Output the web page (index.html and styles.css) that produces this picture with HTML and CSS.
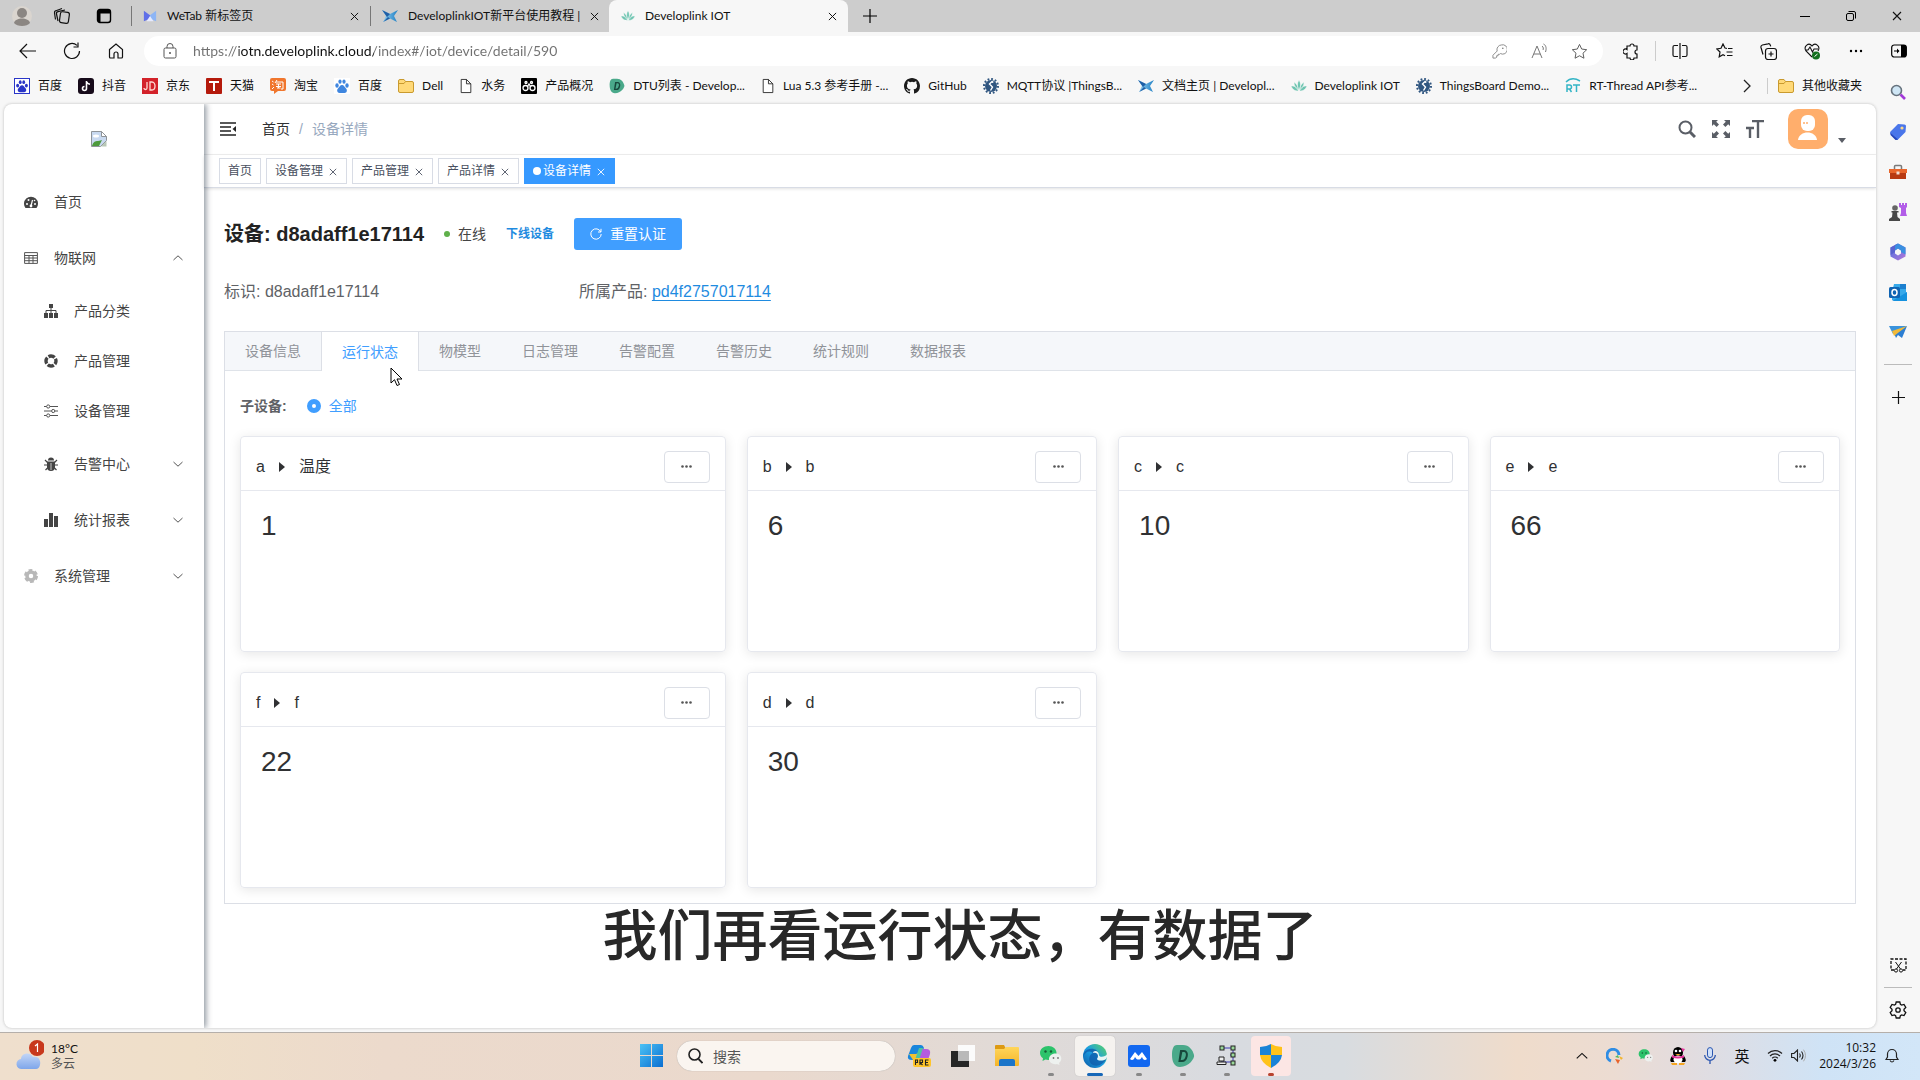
FILE: index.html
```html
<!DOCTYPE html>
<html lang="zh-CN">
<head>
<meta charset="utf-8">
<title>Developlink IOT</title>
<link rel="stylesheet" href="styles.css">
</head>
<body>
<svg class="defs" aria-hidden="true">
  <defs>
    <linearGradient id="g-blue" x1="0" y1="0" x2="1" y2="1"><stop offset="0" stop-color="#4cc2f5"/><stop offset="1" stop-color="#0a6ed1"/></linearGradient>
    <linearGradient id="g-edge" x1="0" y1="1" x2="1" y2="0"><stop offset="0" stop-color="#0c59a4"/><stop offset=".5" stop-color="#1b9de2"/><stop offset="1" stop-color="#5fd85c"/></linearGradient>
    <linearGradient id="g-folder" x1="0" y1="0" x2="0" y2="1"><stop offset="0" stop-color="#ffd65a"/><stop offset="1" stop-color="#f5b52a"/></linearGradient>
    <linearGradient id="g-purple" x1="0" y1="0" x2="1" y2="1"><stop offset="0" stop-color="#4a6fe0"/><stop offset="1" stop-color="#b478d8"/></linearGradient>
    <linearGradient id="g-cloud" x1="0" y1="0" x2="0" y2="1"><stop offset="0" stop-color="#c3d6f7"/><stop offset="1" stop-color="#7ea6ea"/></linearGradient>
    <linearGradient id="g-bow" x1="0" y1="0" x2="1" y2="0"><stop offset="0" stop-color="#9ad4f2"/><stop offset="1" stop-color="#1f7fc4"/></linearGradient>
  </defs>
  <symbol id="close" viewBox="0 0 10 10"><path d="M1 1l8 8M9 1l-8 8" fill="none" stroke="currentColor" stroke-width="1.1"/></symbol>
  <symbol id="bow" viewBox="0 0 16 16"><path d="M0 2l8 4 8-4-4 6 3 6-7-3.500L1 14l3-6z" fill="url(#g-bow)"/><path d="M0 2l8 4-3 3zM1 14l5-5 2 1.500z" fill="#1f5fa6"/></symbol>
  <symbol id="leaf" viewBox="0 0 16 16"><path d="M8 2c2 3 2 7 0 11-2-4-2-8 0-11zM3 4c3 2 4 5 5 9-3-2-5-5-5-9zM13 4c-3 2-4 5-5 9 3-2 5-5 5-9zM0 8c4 0 6 1 8 5-4 0-6-1-8-5zM16 8c-4 0-6 1-8 5 4 0 6-1 8-5z" fill="#6cc4b0" stroke="#f7f7f7" stroke-width=".5"/></symbol>
  <symbol id="paw" viewBox="0 0 16 16"><g fill="currentColor"><ellipse cx="3" cy="7.500" rx="1.700" ry="2.200"/><ellipse cx="6" cy="3.600" rx="1.600" ry="2.200"/><ellipse cx="10" cy="3.600" rx="1.600" ry="2.200"/><ellipse cx="13" cy="7.500" rx="1.700" ry="2.200"/><path d="M8 7c2 0 2.500 2 4 3.500s1 4.500-1.500 4.500H5.500C3 15 2.500 11.500 4 10.500 5.500 9 6 7 8 7z"/></g></symbol>
  <symbol id="folder" viewBox="0 0 16 16"><path d="M.5 3a1.500 1.500 0 0 1 1.500-1.500h4L7.500 3.500H14A1.500 1.500 0 0 1 15.500 5v8a1.500 1.500 0 0 1-1.500 1.500H2A1.500 1.500 0 0 1 .5 13z" fill="#ffd978" stroke="#c99a2e"/><path d="M1 5.500h5l1.500-2" fill="none" stroke="#c99a2e"/></symbol>
  <symbol id="page" viewBox="0 0 16 16"><path d="M2.500.5h6l5 5v10h-11zM8.500.5v5h5" fill="#fff" stroke="#222"/></symbol>
  <symbol id="dlogo" viewBox="0 0 24 24"><path d="M6 1h6c6 0 10 5 11 10 1 3-5 12-14 12C3 23 1 17 1 11 1 6 2 1 6 1z" fill="#4aa98a"/><path d="M10 7h3c5 0 3 10-2 10H8.500zM10.500 7L8.500 17" fill="none" stroke="#17483b" stroke-width="2"/></symbol>
  <symbol id="gearblue" viewBox="0 0 16 16"><circle cx="8" cy="8" r="6" fill="#305680"/><circle cx="8" cy="8" r="7" fill="none" stroke="#305680" stroke-width="2" stroke-dasharray="1.800 1.860"/><path d="M9 3.500L6.500 6l3 3-2 3.500" fill="none" stroke="#fff" stroke-width="1.400"/><circle cx="9.500" cy="4" r="1" fill="#fff"/></symbol>
  <symbol id="chev" viewBox="0 0 12 12"><path d="M1.500 4L6 8.200 10.500 4" fill="none" stroke="currentColor"/></symbol>
  <symbol id="wechat" viewBox="0 0 24 24"><path d="M9.500 2C4.500 2 1 5.200 1 9c0 2.200 1.200 4 3 5.300L3.500 17l3-1.500c5 1.500 11-1.500 11-6.500 0-4-3.500-7-8-7z" fill="#2cc36b"/><circle cx="6.500" cy="7.500" r="1.200" fill="#145c33"/><circle cx="12" cy="7.500" r="1.200" fill="#145c33"/><path d="M16.500 9.500c-4 0-6.500 2.500-6.500 5.500 0 3.500 4 6 8 5l2.500 1-.5-2c4-3 3-9.500-3.500-9.500z" fill="#eef1ef"/><circle cx="14.500" cy="14" r=".9" fill="#777"/><circle cx="19" cy="14" r=".9" fill="#777"/></symbol>
  <symbol id="tri" viewBox="0 0 8 12"><path d="M1 1l6 5-6 5z" fill="currentColor"/></symbol>
</svg>

<header class="titlebar">
  <button class="tb-btn" aria-label="个人资料"><svg width="20" height="20" viewBox="0 0 20 20"><circle cx="10" cy="10" r="10" fill="#dad5cf"/><circle cx="10" cy="7" r="5" fill="#8b8682"/><path d="M2 17c1-6 15-6 16 0-3 4-13 4-16 0z" fill="#8b8682"/></svg></button>
  <button class="tb-btn narrow" aria-label="工作区"><svg width="18" height="18" viewBox="0 0 18 18"><g fill="none" stroke="#111" stroke-width="1.200"><rect x="7" y="5" width="9" height="11" rx="2" transform="rotate(8 11 10)"/><path d="M5 14L3.500 7c-.3-1.200.3-2 1.500-2.300L12 3M2.500 12.500L1.500 6c-.2-1.200.3-2 1.500-2.300L9 1.500"/></g></svg></button>
  <button class="tb-btn wide" aria-label="标签操作"><svg width="16" height="16" viewBox="0 0 16 16"><rect x="1.500" y="1.500" width="13" height="13" rx="2.500" fill="none" stroke="#000" stroke-width="1.400"/><path d="M2 2h12v3.500H2zM2 5h2.500v9H2z"/></svg></button>
  <nav class="tabs">
    <div class="tab"><svg width="14" height="14" viewBox="0 0 16 16"><path d="M1 2l7 5v4l-7 3z" fill="#5f6fe8"/><path d="M15 2L8 7v4l7 3z" fill="#8db5f5"/><path d="M4 14l4-6 4 6z" fill="#e6eaff"/></svg><a href="#" class="tab-name">WeTab 新标签页</a><button class="x" aria-label="关闭"><svg width="9" height="9"><use href="#close"/></svg></button></div>
    <div class="tab"><svg width="16" height="16"><use href="#bow"/></svg><a href="#" class="tab-name">DeveloplinkIOT新平台使用教程 |</a><button class="x" aria-label="关闭"><svg width="9" height="9"><use href="#close"/></svg></button></div>
    <div class="tab on"><svg width="14" height="14"><use href="#leaf"/></svg><a href="#" class="tab-name">Developlink IOT</a><button class="x" aria-label="关闭"><svg width="9" height="9"><use href="#close"/></svg></button></div>
  </nav>
  <button class="tb-btn" aria-label="新标签"><svg width="14" height="14" viewBox="0 0 14 14"><path d="M7 0v14M0 7h14" stroke="#000" stroke-width="1.200"/></svg></button>
  <div class="winctl">
    <button aria-label="最小化"><svg width="10" height="10" viewBox="0 0 10 10"><path d="M0 5.500h10" stroke="#000"/></svg></button>
    <button aria-label="还原"><svg width="10" height="10" viewBox="0 0 10 10"><g fill="none" stroke="#000"><rect x=".5" y="2.500" width="7" height="7" rx="1.500"/><path d="M2.500.5H8A1.500 1.500 0 0 1 9.500 2v5.500"/></g></svg></button>
    <button aria-label="关闭"><svg width="10" height="10"><use href="#close"/></svg></button>
  </div>
</header>

<div class="toolbar">
  <button class="nav-btn" aria-label="后退"><svg width="18" height="16" viewBox="0 0 18 16"><path d="M17 8H1.500M8 1L1 8l7 7" fill="none" stroke="#111" stroke-width="1.200"/></svg></button>
  <button class="nav-btn" aria-label="刷新"><svg width="18" height="18" viewBox="0 0 18 18"><path d="M16.500 9a7.500 7.500 0 1 1-2.500-5.600M15 .5V5h-4.500" fill="none" stroke="#111" stroke-width="1.200"/></svg></button>
  <button class="nav-btn" aria-label="主页"><svg width="16" height="16" viewBox="0 0 16 16"><path d="M1.500 6.500L8 1l6.500 5.500V14a1 1 0 0 1-1 1H10v-4a2 2 0 0 0-4 0v4H2.500a1 1 0 0 1-1-1z" fill="none" stroke="#111" stroke-width="1.200"/></svg></button>
  <div class="address">
    <svg width="14" height="16" viewBox="0 0 14 16"><rect x="1" y="5" width="12" height="10" rx="1.500" fill="none" stroke="#555"/><path d="M4 5V3.500a3 3 0 0 1 6 0V5" fill="none" stroke="#555"/><circle cx="7" cy="10" r="1" fill="#555"/></svg>
    <input class="url" type="text" aria-label="地址" value="https://iotn.developlink.cloud/index#/iot/device/detail/590">
    <button class="addr-btn" aria-label="密码"><svg width="15" height="15" viewBox="0 0 16 16"><path d="M10 1a5 5 0 0 0-4.500 6.500L1 12v3h3l1-1v-1.500h1.500V11H8l1-.8A5 5 0 1 0 10 1z" fill="none" stroke="#888"/><circle cx="11.500" cy="4.500" r=".9" fill="#888"/></svg></button>
    <button class="addr-btn" aria-label="朗读"><svg width="17" height="16" viewBox="0 0 17 16"><path d="M1 15L6 3l5 12M2.800 11h6.400M11 3c1.500 1 1.500 3 1 4M12.500 1c3 1.500 3 5 2 8" fill="none" stroke="#777"/></svg></button>
    <button class="addr-btn" aria-label="收藏"><svg width="17" height="17" viewBox="0 0 18 18"><path d="M9 1.500l2.300 4.900 5.300.7-3.900 3.700 1 5.300L9 13.500l-4.700 2.600 1-5.300L1.400 7.100l5.300-.7z" fill="none" stroke="#555"/></svg></button>
  </div>
  <button class="nav-btn" aria-label="扩展"><svg width="17" height="17" viewBox="0 0 17 17"><path d="M4 3h3a2 2 0 0 1 4 0h3v4a2 2 0 0 0 0 4v4h-3a2 2 0 0 1-4 0H4v-4.500a2.500 2.500 0 1 1 0-4z" fill="none" stroke="#111" stroke-width="1.200"/></svg></button>
  <span class="vline"></span>
  <button class="nav-btn" aria-label="分屏"><svg width="16" height="16" viewBox="0 0 16 16"><path d="M6 2.500H2.500a1.500 1.500 0 0 0-1.500 1.500v8a1.500 1.500 0 0 0 1.500 1.500H6M10 2.500h3.500A1.500 1.500 0 0 1 15 4v8a1.500 1.500 0 0 1-1.500 1.500H10M8 0v16" fill="none" stroke="#111" stroke-width="1.200"/></svg></button>
  <button class="nav-btn" aria-label="收藏夹"><svg width="17" height="16" viewBox="0 0 17 16"><path d="M11 5.500L9 5 7 1 5 5.300.8 5.900 4 9l-.8 4.800L7 11.700l2 1M12 5.500h4.500M10.500 9H16.500M11 12.500h5.500" fill="none" stroke="#111" stroke-width="1.200"/></svg></button>
  <button class="nav-btn" aria-label="集锦"><svg width="17" height="17" viewBox="0 0 17 17"><rect x="5.500" y="5.500" width="11" height="11" rx="2.500" fill="none" stroke="#111" stroke-width="1.200"/><path d="M11 8.500v5M8.500 11h5M3 11.500L1 4.500C.7 3.300 1.200 2.400 2.400 2L8 .8c1.200-.3 2 .4 2.400 1.600l.3 1" fill="none" stroke="#111" stroke-width="1.200"/></svg></button>
  <button class="nav-btn" aria-label="浏览器健康"><svg width="17" height="17" viewBox="0 0 17 17"><path d="M8 14L2 8C-1 3 5-1 8 3c3-4 9 0 6 5M1 7h3l2-3 2.500 5L10 6h4" fill="none" stroke="#111" stroke-width="1.100"/><circle cx="12" cy="12.500" r="4" fill="#13711f"/><path d="M10.500 13.500L13.500 11" stroke="#fff"/></svg></button>
  <button class="nav-btn" aria-label="更多"><svg width="14" height="4" viewBox="0 0 14 4"><circle cx="2" cy="2" r="1.200"/><circle cx="7" cy="2" r="1.200"/><circle cx="12" cy="2" r="1.200"/></svg></button>
  <button class="nav-btn last" aria-label="边栏"><svg width="16" height="14" viewBox="0 0 16 14"><rect x=".7" y="1" width="14.600" height="12" rx="2.500" fill="none" stroke="#000" stroke-width="1.200"/><path d="M10 1h4l1.500 2v8L14 13h-4zM3 6.500h3V4.500L8.500 7 6 9.500v-2H3z"/></svg></button>
</div>

<div class="browser">
  <div class="left">
    <nav class="bookmarks">
      <a href="#"><svg class="boxed" width="16" height="16" color="#2a36c8"><use href="#paw"/></svg><span>百度</span></a>
      <a href="#"><svg width="16" height="16" viewBox="0 0 16 16"><rect width="16" height="16" rx="3" fill="#170b1a"/><path d="M8.500 3v7.500a2 2 0 1 1-2-2M8.500 3c.3 2 1.500 3 3.500 3.200" fill="none" stroke="#fff" stroke-width="1.600"/></svg><span>抖音</span></a>
      <a href="#"><svg width="16" height="16" viewBox="0 0 16 16"><rect width="16" height="16" fill="#d3222a"/><path d="M5 4v6c0 2-3 2-3 0M8 4v8h2c4 0 4-8 0-8z" fill="none" stroke="#ffd9d2" stroke-width="1.300"/></svg><span>京东</span></a>
      <a href="#"><svg width="16" height="16" viewBox="0 0 16 16"><rect width="16" height="16" rx="1" fill="#b51a0c"/><path d="M3 4h10M8 4v9" stroke="#fff" stroke-width="2"/></svg><span>天猫</span></a>
      <a href="#"><svg width="16" height="16" viewBox="0 0 16 16"><path d="M2 0h12q2 0 2 2v9q0 2-2 2H8l-4 3v-3H2q-2 0-2-2V2q0-2 2-2z" fill="#f0762d"/><path d="M2 3l1.500 1M2 6l1.500 1M2 11l2-2M7 2L5 5M6 4h7v7h-2M6 6h5M6 8.500h5M8.500 6v4M7 10h3.500" fill="none" stroke="#fff"/></svg><span>淘宝</span></a>
      <a href="#"><svg class="white" width="16" height="16" color="#3f86df"><use href="#paw"/></svg><span>百度</span></a>
      <a href="#"><svg width="16" height="16"><use href="#folder"/></svg><span>Dell</span></a>
      <a href="#"><svg width="14" height="16"><use href="#page"/></svg><span>水务</span></a>
      <a href="#"><svg width="16" height="16" viewBox="0 0 16 16"><rect width="16" height="16" rx="1"/><g fill="none" stroke="#fff" stroke-width="1.300"><circle cx="4.500" cy="10" r="2.500"/><circle cx="11.500" cy="10" r="2.500"/><circle cx="5" cy="4.500" r="1"/><circle cx="10.500" cy="4.500" r="1"/><path d="M6.500 8.500L8 6l1.500 2.500"/></g></svg><span>产品概况</span></a>
      <a href="#"><svg width="16" height="16"><use href="#dlogo"/></svg><span>DTU列表 - Develop...</span></a>
      <a href="#"><svg width="14" height="16"><use href="#page"/></svg><span>Lua 5.3 参考手册 -...</span></a>
      <a href="#"><svg width="16" height="16" viewBox="0 0 16 16"><path d="M8 0C3.580 0 0 3.580 0 8c0 3.540 2.290 6.530 5.470 7.590.4.070.55-.17.55-.38v-1.490c-2.010.37-2.530-.49-2.690-.94-.09-.23-.48-.94-.82-1.130-.28-.15-.68-.52-.01-.53.63-.01 1.080.58 1.230.82.72 1.210 1.870.87 2.330.66.07-.52.28-.87.51-1.070-1.780-.2-3.640-.89-3.640-3.950 0-.87.31-1.590.82-2.150-.08-.2-.36-1.020.08-2.120 0 0 .67-.21 2.200.82a7.600 7.600 0 0 1 4 0c1.530-1.040 2.200-.82 2.200-.82.44 1.100.16 1.920.08 2.120.51.56.82 1.270.82 2.150 0 3.070-1.870 3.750-3.650 3.950.29.25.54.73.54 1.480v2.200c0 .21.15.46.55.38A8 8 0 0 0 16 8c0-4.420-3.580-8-8-8z" fill="#1b1b1b"/></svg><span>GitHub</span></a>
      <a href="#"><svg width="16" height="16"><use href="#gearblue"/></svg><span>MQTT协议 |ThingsB...</span></a>
      <a href="#"><svg width="16" height="16"><use href="#bow"/></svg><span>文档主页 | Developl...</span></a>
      <a href="#"><svg width="16" height="16"><use href="#leaf"/></svg><span>Developlink IOT</span></a>
      <a href="#"><svg width="16" height="16"><use href="#gearblue"/></svg><span>ThingsBoard Demo...</span></a>
      <a href="#"><svg width="16" height="16" viewBox="0 0 16 16"><path d="M1 4c4-4 9-4 14-1M2 14V7h2.500q2 0 2 2t-2 2H2m2.500 0L6.500 14M8 7h7M11.500 7v7" fill="none" stroke="#35b5c6" stroke-width="1.500"/></svg><span>RT-Thread API参考...</span></a>
      <button class="overflow" aria-label="更多收藏"><svg width="8" height="14" viewBox="0 0 8 14"><path d="M1 1l6 6-6 6" fill="none" stroke="#222" stroke-width="1.300"/></svg></button>
      <a class="other" href="#"><svg width="16" height="16"><use href="#folder"/></svg><span>其他收藏夹</span></a>
    </nav>

    <div class="app">
      <aside class="side">
        <div class="logo"><svg width="16" height="16" viewBox="0 0 16 16" role="img" aria-label="logo"><path d="M.5.500h10l5 5v4l-6 6h-9z" fill="#c8d9f0" stroke="#8f9499"/><path d="M10.500.500v5h5z" fill="#fff" stroke="#8f9499"/><path d="M1 15c1-4 3-5 6-5 2 0 3-1 4-1l-3 6z" fill="#4d9a3c"/><ellipse cx="5" cy="5" rx="3" ry="1.500" fill="#fff"/><path d="M10 15.500h5.500V10z" fill="#b7c7b5"/></svg></div>
        <nav class="menu">
          <a href="#"><svg width="14" height="12" viewBox="0 0 14 12"><path d="M1.500 12A7 7 0 1 1 12.500 12z" fill="#444"/><path d="M7 10L8.500 4" stroke="#fff" stroke-width="1.200"/><g fill="#fff"><circle cx="3" cy="8" r="1"/><circle cx="4.500" cy="4" r="1"/><circle cx="11" cy="8" r="1"/><circle cx="10.500" cy="4.500" r=".8"/><circle cx="7" cy="10" r="1.400"/></g></svg><span>首页</span></a>
          <a href="#"><svg width="14" height="12" viewBox="0 0 14 12"><path d="M.6.600h12.800v10.800H.6zM.6 3.500h12.800M.6 6h12.800M.6 8.700h12.800M5 3.500v8M9 3.500v8" fill="none" stroke="#555"/></svg><span>物联网</span><svg class="arrow up" width="12" height="12"><use href="#chev"/></svg></a>
          <a class="sub" href="#"><svg width="14" height="14" viewBox="0 0 14 14"><path d="M5 0h4v4H5zM0 9h4v5H0zM5 9h4v5H5zM10 9h4v5h-4z" fill="#444"/><path d="M7 4v5M2 9V6.500h10V9" fill="none" stroke="#444"/></svg><span>产品分类</span></a>
          <a class="sub" href="#"><svg width="14" height="14" viewBox="0 0 14 14"><circle cx="7" cy="7" r="5" fill="none" stroke="#444" stroke-width="3.400" stroke-dasharray="6.500 1.350" stroke-dashoffset="3.200"/></svg><span>产品管理</span></a>
          <a class="sub" href="#"><svg width="14" height="14" viewBox="0 0 14 14"><g fill="none" stroke="#555"><path d="M0 2.500h2.500M6 2.500h8M0 7h7.500M11 7h3M0 11.500h2.500M6 11.500h8"/><circle cx="4.200" cy="2.500" r="1.600"/><circle cx="9.200" cy="7" r="1.600"/><circle cx="4.200" cy="11.500" r="1.600"/></g></svg><span>设备管理</span></a>
          <a class="sub tall" href="#"><svg width="14" height="14" viewBox="0 0 14 14"><path d="M4 3.500a3 3 0 0 1 6 0zM3 4.500h8V10a4 4 0 0 1-8 0z" fill="#444"/><path d="M0 8h14M1 3l3 3M13 3l-3 3M1.500 13L4 10.500M12.500 13L10 10.500" stroke="#444" stroke-width="1.200"/><path d="M7 6v7" stroke="#fff" stroke-width=".7"/></svg><span>告警中心</span><svg class="arrow" width="12" height="12"><use href="#chev"/></svg></a>
          <a class="sub tall" href="#"><svg width="14" height="14" viewBox="0 0 14 14"><path d="M0 6h4v8H0zM5 0h4v14H5zM10 3h4v11h-4z" fill="#444"/></svg><span>统计报表</span><svg class="arrow" width="12" height="12"><use href="#chev"/></svg></a>
          <a href="#"><svg width="14" height="14" viewBox="0 0 14 14"><circle cx="7" cy="7" r="4" fill="none" stroke="#b8b8b8" stroke-width="3.500"/><circle cx="7" cy="7" r="6" fill="none" stroke="#b8b8b8" stroke-width="2" stroke-dasharray="3.800 2.480"/></svg><span>系统管理</span><svg class="arrow" width="12" height="12"><use href="#chev"/></svg></a>
        </nav>
      </aside>

      <main class="main">
        <div class="navbar">
          <button class="fold" aria-label="折叠菜单"><svg width="16" height="14" viewBox="0 0 16 14"><path d="M0 1h16M0 5h11M0 9h11M0 13h16" stroke="#222" stroke-width="1.600"/><path d="M16 4v6l-3.500-3z" fill="#222"/></svg></button>
          <nav class="crumb"><a href="#">首页</a><i>/</i><span>设备详情</span></nav>
          <div class="right-menu">
            <button aria-label="搜索"><svg width="18" height="18" viewBox="0 0 18 18"><circle cx="7.500" cy="7.500" r="6" fill="none" stroke="#5a5e66" stroke-width="2"/><path d="M12 12l5 5" stroke="#5a5e66" stroke-width="3"/></svg></button>
            <button aria-label="全屏"><svg width="18" height="18" viewBox="0 0 18 18"><path d="M0 0h6L4.200 1.800 7 4.600 4.600 7 1.800 4.200 0 6zM18 0v6l-1.800-1.800L13.400 7 11 4.600l2.800-2.800L12 0zM0 18v-6l1.800 1.800L4.600 11 7 13.400l-2.800 2.800L6 18zM18 18h-6l1.800-1.800-2.800-2.800L13.400 11l2.800 2.800L18 12z" fill="#5a5e66"/></svg></button>
            <button aria-label="字号"><svg width="18" height="18" viewBox="0 0 18 18"><path d="M6 1h12M12 1v17M0 8h8M4 8v10" fill="none" stroke="#5a5e66" stroke-width="2.400"/></svg></button>
            <button class="user" aria-label="用户"><svg width="40" height="40" viewBox="0 0 40 40"><rect width="40" height="40" rx="10" fill="#ffae6c"/><rect x="13" y="6" width="14" height="16" rx="6" fill="#fff"/><path d="M10 31c1-10 18-10 19 0z" fill="#fff"/><circle cx="16" cy="14" r="1" fill="#ffae6c"/><circle cx="19" cy="14" r="1" fill="#ffae6c"/></svg><svg class="caret" width="8" height="5" viewBox="0 0 8 5"><path d="M0 0h8L4 5z" fill="#5a5e66"/></svg></button>
          </div>
        </div>
        <nav class="tags">
          <a href="#">首页</a>
          <a href="#">设备管理<svg width="8" height="8"><use href="#close"/></svg></a>
          <a href="#">产品管理<svg width="8" height="8"><use href="#close"/></svg></a>
          <a href="#">产品详情<svg width="8" height="8"><use href="#close"/></svg></a>
          <a href="#" class="cur">设备详情<svg width="8" height="8"><use href="#close"/></svg></a>
        </nav>

        <section class="content">
          <div class="head">
            <h1>设备: d8adaff1e17114</h1>
            <span class="state">在线</span>
            <a class="off" href="#">下线设备</a>
            <button class="primary"><svg width="12" height="12" viewBox="0 0 12 12"><path d="M10.800 4A5.200 5.200 0 1 0 11.200 6M11 .8V4H8" fill="none" stroke="#fff"/></svg>重置认证</button>
          </div>
          <div class="meta">
            <span>标识: d8adaff1e17114</span>
            <span>所属产品: <a href="#">pd4f2757017114</a></span>
          </div>
          <div class="panel">
            <div class="panel-tabs" role="tablist">
              <button role="tab">设备信息</button><button role="tab" class="cur" aria-selected="true">运行状态</button><button role="tab">物模型</button><button role="tab">日志管理</button><button role="tab">告警配置</button><button role="tab">告警历史</button><button role="tab">统计规则</button><button role="tab">数据报表</button>
            </div>
            <div class="panel-body">
              <div class="filter"><b>子设备:</b><label><input type="radio" name="child" checked>全部</label></div>
              <div class="cards">
                <article class="card"><header><h2>a<svg width="8" height="12"><use href="#tri"/></svg>温度</h2><button aria-label="更多"><svg width="11" height="3" viewBox="0 0 11 3"><circle cx="1.500" cy="1.500" r="1.300" fill="#555"/><circle cx="5.500" cy="1.500" r="1.300" fill="#555"/><circle cx="9.500" cy="1.500" r="1.300" fill="#555"/></svg></button></header><p>1</p></article>
                <article class="card"><header><h2>b<svg width="8" height="12"><use href="#tri"/></svg>b</h2><button aria-label="更多"><svg width="11" height="3" viewBox="0 0 11 3"><circle cx="1.500" cy="1.500" r="1.300" fill="#555"/><circle cx="5.500" cy="1.500" r="1.300" fill="#555"/><circle cx="9.500" cy="1.500" r="1.300" fill="#555"/></svg></button></header><p>6</p></article>
                <article class="card"><header><h2>c<svg width="8" height="12"><use href="#tri"/></svg>c</h2><button aria-label="更多"><svg width="11" height="3" viewBox="0 0 11 3"><circle cx="1.500" cy="1.500" r="1.300" fill="#555"/><circle cx="5.500" cy="1.500" r="1.300" fill="#555"/><circle cx="9.500" cy="1.500" r="1.300" fill="#555"/></svg></button></header><p>10</p></article>
                <article class="card"><header><h2>e<svg width="8" height="12"><use href="#tri"/></svg>e</h2><button aria-label="更多"><svg width="11" height="3" viewBox="0 0 11 3"><circle cx="1.500" cy="1.500" r="1.300" fill="#555"/><circle cx="5.500" cy="1.500" r="1.300" fill="#555"/><circle cx="9.500" cy="1.500" r="1.300" fill="#555"/></svg></button></header><p>66</p></article>
                <article class="card"><header><h2>f<svg width="8" height="12"><use href="#tri"/></svg>f</h2><button aria-label="更多"><svg width="11" height="3" viewBox="0 0 11 3"><circle cx="1.500" cy="1.500" r="1.300" fill="#555"/><circle cx="5.500" cy="1.500" r="1.300" fill="#555"/><circle cx="9.500" cy="1.500" r="1.300" fill="#555"/></svg></button></header><p>22</p></article>
                <article class="card"><header><h2>d<svg width="8" height="12"><use href="#tri"/></svg>d</h2><button aria-label="更多"><svg width="11" height="3" viewBox="0 0 11 3"><circle cx="1.500" cy="1.500" r="1.300" fill="#555"/><circle cx="5.500" cy="1.500" r="1.300" fill="#555"/><circle cx="9.500" cy="1.500" r="1.300" fill="#555"/></svg></button></header><p>30</p></article>
              </div>
            </div>
          </div>
        </section>
      </main>
    </div>
  </div>

  <aside class="rail">
    <button aria-label="搜索"><svg width="16" height="16" viewBox="0 0 16 16"><circle cx="6.500" cy="6.500" r="5" fill="#cfe6f5" stroke="#66727d" stroke-width="1.600"/><path d="M10.500 10.500l4.500 4.500" stroke="#a23ad8" stroke-width="2.600"/></svg></button>
    <button aria-label="购物"><svg width="18" height="18" viewBox="0 0 18 18"><path d="M9 1l6.500.5q1.500 0 1.500 1.500L16.500 9 9 16.500q-1.200 1-2.400 0L1.500 11q-1-1.200 0-2.400z" fill="#4a76ea"/><path d="M1.500 10L9 16.500l-2.500.5L1.500 12z" fill="#2646b8"/><circle cx="13" cy="5" r="1.600" fill="#fbd78a"/></svg></button>
    <button aria-label="工具"><svg width="18" height="16" viewBox="0 0 18 16"><path d="M5.500 5V2.500q0-1 1-1h5q1 0 1 1V5" fill="none" stroke="#7a7a7a" stroke-width="1.500"/><path d="M0 5h18v4H0z" fill="#e8662c"/><path d="M1 9h16v6H1z" fill="#b83a12"/><rect x="7.500" y="7.500" width="3" height="3" fill="#f1ded4"/></svg></button>
    <button aria-label="游戏"><svg width="18" height="18" viewBox="0 0 18 18"><path d="M10 0h2v2h1V0h2v2h1V0h2v4l-1 1v5l1 3h-7l1-3V5l-2-1z" fill="#b25de8"/><circle cx="6" cy="5" r="2.800" fill="#666"/><path d="M2.500 8h7v1.500H8L8.500 14l2.500 2v2H0v-2l3-2 .5-4.500h-1z" fill="#484848"/></svg></button>
    <button aria-label="Microsoft 365"><svg width="18" height="18" viewBox="0 0 18 18"><path d="M9 .5l7.500 4v9l-7.500 4-7.500-4v-9zM9 5.500L6 7.500v3l3 2 3-2v-3z" fill="url(#g-purple)" fill-rule="evenodd"/><path d="M9 .5l7.500 4v7L12 9V7.500L9 5.500 6 7.500V2z" fill="#3a8fe0"/><path d="M1.500 4.500L9 .5 6 3v6l-4.500 3z" fill="#5a62cf"/></svg></button>
    <button aria-label="Outlook"><svg width="18" height="18" viewBox="0 0 18 18"><path d="M5 1h12v8l1 1v7H3V9z" fill="#37a9ea"/><path d="M11 1h6v5h-6z" fill="#1c80cf"/><path d="M18 9l-8 5-7 4h15z" fill="#1591de"/><rect x="0" y="4" width="11" height="11" rx="1.500" fill="#0f64b3"/><ellipse cx="5.500" cy="9.500" rx="2.500" ry="3" fill="none" stroke="#fff" stroke-width="1.500"/></svg></button>
    <button aria-label="Drop"><svg width="18" height="14" viewBox="0 0 18 14"><path d="M0 1h18L8 7l-4 2z" fill="#3a93dc"/><path d="M18 1l-5 12-4-3-2 3-2-5z" fill="#2c7ed2"/><path d="M18 1L3 6l2 5z" fill="#f0b93a"/></svg></button>
    <hr>
    <button aria-label="添加"><svg width="13" height="13" viewBox="0 0 13 13"><path d="M6.500 0v13M0 6.500h13" stroke="#111" stroke-width="1.200"/></svg></button>
    <button class="push" aria-label="截图"><svg width="17" height="15" viewBox="0 0 17 15"><path d="M4 12H1V1h15v11h-3" fill="none" stroke="#111" stroke-width="1.300" stroke-dasharray="3 1.500"/><path d="M5.500 4l5 7M11.500 4l-5 7" stroke="#111"/><circle cx="6" cy="12.500" r="1.600" fill="none" stroke="#111"/><circle cx="11" cy="12.500" r="1.600" fill="none" stroke="#111"/></svg></button>
    <hr class="low">
    <button aria-label="设置"><svg width="18" height="18" viewBox="0 0 18 18"><path d="M7.200 1h3.600l.6 2.400 1.200.7 2.400-.7 1.800 3.100L15 8.300v1.400l1.800 1.800-1.800 3.100-2.400-.7-1.200.7-.6 2.400H7.200l-.6-2.400-1.200-.7-2.400.7-1.800-3.100L3 9.700V8.300L1.200 6.500 3 3.400l2.400.7 1.200-.7z" fill="none" stroke="#111" stroke-width="1.300"/><circle cx="9" cy="9" r="2.200" fill="none" stroke="#111" stroke-width="1.300"/></svg></button>
  </aside>
</div>

<footer class="taskbar">
  <button class="weather"><svg width="28" height="32" viewBox="0 0 28 32"><path d="M6 29a5 5 0 0 1-1-10c0-6 9-8 12-2 6-1 8 4 7 8q-1 4-4 4z" fill="url(#g-cloud)"/><circle cx="21" cy="8" r="8" fill="#c8381c"/><path d="M19 6l2.500-2v8" fill="none" stroke="#fff" stroke-width="1.200"/></svg><span>18°C<br><em>多云</em></span></button>
  <div class="dock">
    <button class="start" aria-label="开始"><svg width="23" height="23" viewBox="0 0 23 23"><path d="M0 0h11v11H0zM12 0h11v11H12zM0 12h11v11H0zM12 12h11v11H12z" fill="url(#g-blue)"/></svg></button>
    <label class="search"><svg width="15" height="16" viewBox="0 0 15 16"><circle cx="6.500" cy="6.500" r="5.500" fill="none" stroke="#222" stroke-width="1.600"/><path d="M10.500 11l4 4" stroke="#222" stroke-width="1.800"/></svg><input type="text" placeholder="搜索" aria-label="搜索"></label>
    <button aria-label="Copilot"><svg width="24" height="24" viewBox="0 0 24 24"><path d="M7 1h7q2 0 3 3l-6 12H5Q0 16 1 12L4 4q1-3 3-3z" fill="#1a86dc"/><path d="M2 10l4 6h5l3-8-5 2z" fill="#f0c232"/><path d="M14 5h5q5 0 4 5l-3 9q-1 3-5 3h-4z" fill="#b45be0"/><path d="M16 4l-4 12H8l4-12z" fill="#4fc3a0"/><rect x="6" y="14" width="18" height="9" rx="2" fill="#ffc52b"/><path d="M8.500 21v-5h2v2.500h-2M13 21v-5h2.500v2.500H13l2.500 2.500M21.500 16H18.500v5h3M18.500 18.500h2.500" fill="none" stroke="#222" stroke-width="1.100"/></svg></button>
    <button aria-label="任务视图"><svg width="24" height="24" viewBox="0 0 24 24"><path d="M7 1h17v16H7z" fill="#fbfbfb"/><path d="M0 7h18v16H0z" fill="#262626"/><path d="M7 7h11v10H7z" fill="#b9b9b9"/></svg></button>
    <button aria-label="资源管理器"><svg width="24" height="24" viewBox="0 0 24 24"><path d="M0 2q0-1 1-1h8l2 4H0z" fill="#dd9a13"/><path d="M0 5h9l2-2h12q1 0 1 1v17q0 1-1 1H0z" fill="url(#g-folder)"/><path d="M4 22v-5q0-2 2-2h12q2 0 2 2v5z" fill="#1b75c9"/></svg></button>
    <button class="run" aria-label="微信"><svg width="24" height="24"><use href="#wechat"/></svg></button>
    <button class="run front" aria-label="Edge"><svg width="24" height="24" viewBox="0 0 24 24"><circle cx="12" cy="12" r="12" fill="url(#g-edge)"/><path d="M1 9c3-6 14-6 15 2 0 2-2 3-2 4 1 2 6 2 9 0-2 5-8 8-13 6C4 18 6 10 10 9 6 6 2 8 0 13z" fill="#0f5aa8" opacity=".75"/><path d="M10 9c5-1 6 3 4 6 1 2 6 2 9 0 2-3 1-5 1-5-1 3-8 4-8 1 0-5-6-5-6-2z" fill="#e8f6f5"/></svg></button>
    <button class="run" aria-label="腾讯会议"><svg width="22" height="22" viewBox="0 0 22 22"><rect width="22" height="22" rx="3" fill="#1268f0"/><path d="M2 14l5-7 3.500 4L14 7l5 7q-2 2-4 0l-1-2-1.500 2q-2 1-4 0L7 12l-1 2q-2 2-4 0z" fill="#fff"/></svg></button>
    <button class="run" aria-label="Developlink"><svg width="24" height="24"><use href="#dlogo"/></svg></button>
    <button class="run" aria-label="网络"><svg width="22" height="22" viewBox="0 0 22 22"><path d="M7 3h10v14H5M17 10h-3" fill="none" stroke="#3b3bb0"/><g fill="#9bd89a" stroke="#222"><rect x="4" y="1" width="4" height="4"/><rect x="15" y="1" width="4" height="4"/><rect x="15" y="8" width="4" height="4"/><rect x="15" y="16" width="4" height="4"/></g><path d="M3 12h5v4H3zM1 17h9v2.500H1z" fill="#eee" stroke="#222"/></svg></button>
    <button class="run alert" aria-label="安全"><svg width="22" height="24" viewBox="0 0 22 24"><path d="M11 0q5 3 11 3v8H11z" fill="#ffc21a"/><path d="M11 0Q6 3 0 3v8h11z" fill="#1b83d6"/><path d="M0 11h11v13Q1 19 0 11z" fill="#ffc21a"/><path d="M22 11H11v13q10-5 11-13z" fill="#1b83d6"/></svg></button>
  </div>
  <div class="tray">
    <button aria-label="展开"><svg class="up" width="14" height="14"><use href="#chev"/></svg></button>
    <button aria-label="同步"><svg width="17" height="16" viewBox="0 0 17 16"><path d="M5 13A6 6 0 1 1 13 7" fill="none" stroke="#2f8de4" stroke-width="3"/><path d="M9 9l3-2 1 3z" fill="#52b95a"/><path d="M13 8l4 2-2 2z" fill="#f3b42b"/><path d="M9 11l5 1-2 4z" fill="#e8642c"/></svg></button>
    <button aria-label="微信"><svg width="16" height="16"><use href="#wechat"/></svg></button>
    <button aria-label="QQ"><svg width="16" height="18" viewBox="0 0 16 18"><ellipse cx="8" cy="5.500" rx="5" ry="5.500"/><path d="M2 9q-3 4-1 6h14q2-2-1-6z"/><ellipse cx="8" cy="12.500" rx="4.500" ry="4" fill="#fff"/><path d="M2 8q6 3 12 0v2.500q-6 2-12 0z" fill="#e6339b"/><circle cx="6" cy="4" r="1.300" fill="#fff"/><circle cx="10" cy="4" r="1.300" fill="#fff"/><path d="M5 7h6L8 8.500z" fill="#f5a623"/><path d="M11 1l4 1-2 3z" fill="#e6339b"/><path d="M1 16h6v2H2zM9 16h6l-1 2H9z" fill="#f5a623"/></svg></button>
    <button aria-label="麦克风"><svg width="12" height="17" viewBox="0 0 12 17"><rect x="3.500" y=".6" width="5" height="10" rx="2.500" fill="#cfe0fa" stroke="#2a55b0"/><path d="M.7 8a5.300 5.300 0 0 0 10.600 0M6 13.500V17" fill="none" stroke="#2a55b0" stroke-width="1.300"/></svg></button>
    <button class="ime">英</button>
    <button class="pair" aria-label="网络和音量"><svg width="16" height="13" viewBox="0 0 16 13"><path d="M1 4.500a10 10 0 0 1 14 0M3 7a7 7 0 0 1 10 0M5.200 9.300a4 4 0 0 1 5.600 0" fill="none" stroke="#222" stroke-width="1.200"/><circle cx="8" cy="11.300" r="1.400"/></svg><svg width="15" height="13" viewBox="0 0 15 13"><path d="M.6 4.500H3L6.500 1v11L3 8.500H.6zM8.500 4.500q1.500 2 0 4M10.500 2.500q3 4 0 8" fill="none" stroke="#222" stroke-width="1.100"/><path d="M12.500.7q4 5.800 0 11.600" fill="none" stroke="#aaa"/></svg></button>
    <button class="clock">10:32<br>2024/3/26</button>
    <button aria-label="通知"><svg width="14" height="16" viewBox="0 0 14 16"><path d="M1 11.500L2.500 9V6a4.500 4.500 0 0 1 9 0v3l1.500 2.500zM5 12.500q2 3 4 0" fill="none" stroke="#222" stroke-width="1.200"/></svg></button>
  </div>
</footer>

<div class="caption">我们再看运行状态，有数据了</div>
<svg class="cursor" width="13" height="20" viewBox="0 0 13 20" aria-hidden="true"><path d="M1 1v15l3.500-3.300L7 18.500l2.500-1L7 12h5z" fill="#fff" stroke="#000"/></svg>
</body>
</html>
```
FILE: styles.css
```css
* { box-sizing: border-box; }
body {
  margin: 0;
  min-height: 100vh;
  display: flex;
  flex-direction: column;
  position: relative;
  background: #f7f7f7;
  color: #111;
  font: 12px/16px Lato, "Noto Sans CJK SC", sans-serif;
}
button {
  margin: 0;
  padding: 0;
  border: 0;
  background: none;
  color: inherit;
  font: inherit;
  display: flex;
  align-items: center;
  justify-content: center;
}
a { color: inherit; text-decoration: none; }
svg { flex: none; }
.defs { position: absolute; width: 0; height: 0; }

/* Window title bar */
.titlebar { display: flex; align-items: stretch; height: 32px; background: #cdcdcd; }
.tb-btn { width: 44px; height: 32px; }
.tb-btn.narrow { width: 36px; }
.tb-btn.wide { width: 48px; margin-right: 3px; }
.tabs { display: flex; }
.tab {
  width: 239px;
  height: 32px;
  padding: 0 10px 0 12px;
  display: flex;
  align-items: center;
  gap: 10px;
}
.tab:not(.on) { background: linear-gradient(#777, #777) left center / 1px 20px no-repeat; }
.tab.on { background: #f7f7f7; border-radius: 8px 8px 0 0; }
.tab-name { flex: 1; white-space: nowrap; }
.x { width: 11px; height: 20px; }
.winctl { display: flex; margin-left: auto; }
.winctl button { width: 46px; }

/* Toolbar */
.toolbar { display: flex; align-items: center; height: 38px; padding-left: 6px; }
.nav-btn { width: 44px; height: 32px; }
.nav-btn.last { width: 42px; }
.vline { width: 1px; height: 20px; margin: 0 2px; background: #ccc; }
.address {
  flex: 1;
  height: 30px;
  margin: 0 6px;
  padding: 0 12px 0 19px;
  display: flex;
  align-items: center;
  gap: 16px;
  background: #fff;
  border-radius: 15px;
}
.url {
  flex: 1;
  min-width: 0;
  border: 0;
  padding: 0;
  outline: 0;
  font: 14px/20px Lato, sans-serif;
  color: #666;
  background: linear-gradient(90deg, #707070 46px, #111 46px, #111 181px, #707070 181px);
  -webkit-background-clip: text;
  background-clip: text;
  -webkit-text-fill-color: transparent;
}
.addr-btn { width: 24px; height: 24px; }

/* Browser body */
.browser { flex: 1; display: flex; }
.left { flex: 1; min-width: 0; display: flex; flex-direction: column; padding: 0 0 4px 4px; }
.bookmarks { display: flex; align-items: center; height: 34px; padding: 0 14px 2px 10px; gap: 16px; overflow: hidden; }
.bookmarks a { display: flex; align-items: center; gap: 8px; white-space: nowrap; }
.boxed { background: #fff; border: 1px solid #2a36c8; }
.white { background: #fff; }
.overflow { margin-left: auto; width: 24px; }
.bookmarks .other { border-left: 1px solid #ccc; padding-left: 10px; margin-left: -8px; }

/* Edge side rail */
.rail { width: 44px; display: flex; flex-direction: column; align-items: center; padding: 2px 0; }
.rail button { width: 40px; height: 40px; }
.rail hr { width: 28px; height: 1px; border: 0; margin: 12px 0; background: #bbb; }
.rail .push { margin-top: auto; }
.rail .low { margin: 2px 0; }

/* App */
.app {
  flex: 1;
  display: flex;
  background: #fff;
  border-radius: 8px;
  overflow: hidden;
  box-shadow: 0 0 3px #bbb;
  font-family: "Liberation Sans", "Noto Sans CJK SC", sans-serif;
  color: #303133;
}
.side { width: 200px; flex: none; box-shadow: 2px 0 6px rgba(0, 21, 41, .45); z-index: 1; }
.logo { height: 70px; padding-right: 11px; display: flex; align-items: center; justify-content: center; }
.menu a { display: flex; align-items: center; height: 56px; padding: 0 20px; gap: 16px; font-size: 14px; color: #444; }
.menu .sub { height: 50px; padding-left: 40px; }
.menu .tall { height: 56px; }
.arrow { margin-left: auto; color: #555; }
.up { transform: rotate(180deg); }

.main { flex: 1; min-width: 0; }
.navbar { height: 51px; display: flex; align-items: center; padding: 0 30px 0 16px; border-bottom: 1px solid #f0f0f0; }
.crumb { display: flex; gap: 9px; margin-left: 26px; font-size: 14px; }
.crumb i { font-style: normal; color: #97a8be; width: 4px; }
.crumb span { color: #97a8be; }
.right-menu { margin-left: auto; display: flex; align-items: center; gap: 16px; }
.user { align-items: flex-end; gap: 10px; margin-left: 8px; }
.caret { margin-bottom: 6px; }

.tags { display: flex; gap: 5px; height: 33px; padding: 3px 15px 0; border-bottom: 1px solid #d8dce5; box-shadow: 0 1px 3px rgba(0, 0, 0, .12); }
.tags a { display: flex; align-items: center; height: 26px; padding: 0 8px; border: 1px solid #d8dce5; font-size: 12px; color: #495060; }
.tags svg { margin: 2px 1px 0 6px; }
.tags .cur { background: #3699ff; border-color: #3699ff; color: #fff; }
.tags .cur::before { content: ""; width: 8px; height: 8px; margin-right: 2px; border-radius: 50%; background: #fff; }

.content { padding: 30px 20px 0; }
.head { display: flex; align-items: center; height: 32px; }
h1 { margin: 0; font-size: 20px; line-height: 28px; color: #222; }
.state { display: flex; align-items: center; gap: 8px; margin-left: 20px; font-size: 14px; color: #444; }
.state::before { content: ""; width: 6px; height: 6px; border-radius: 50%; background: #5fb04a; }
.off { margin-left: 20px; color: #1f8be0; font-weight: 700; }
.primary { gap: 8px; height: 32px; width: 108px; margin-left: 20px; border-radius: 3px; background: #409eff; color: #fff; font-size: 14px; }
.meta { display: flex; margin: 32px 0 29px; font-size: 16px; line-height: 20px; color: #606266; }
.meta span { width: 355px; }
.meta a { color: #1f8be0; text-decoration: underline; text-underline-offset: 3px; }

.panel { border: 1px solid #dcdfe6; }
.panel-tabs { display: flex; height: 39px; background: #f5f7fa; border-bottom: 1px solid #dfe3e9; }
.panel-tabs button { height: 38px; padding: 0 20px; border-left: 1px solid transparent; font-size: 14px; color: #909399; }
.panel-tabs button:first-child { border-left: 0; }
.panel-tabs .cur { height: 39px; background: #fff; color: #409eff; border-left-color: #dcdfe6; border-right: 1px solid #dcdfe6; }
.panel-tabs .cur + button { border-left: 0; }
.panel-body { padding: 25px 15px 15px; }
.filter { display: flex; align-items: center; gap: 20px; height: 20px; margin-bottom: 20px; font-size: 14px; color: #606266; }
.filter label { display: flex; align-items: center; gap: 8px; color: #409eff; }
.filter input { appearance: none; width: 14px; height: 14px; margin: 0; border-radius: 50%; border: 5px solid #409eff; background: #fff; }

.cards { display: grid; grid-template-columns: 97fr 70fr 70fr 70fr; gap: 20px 21px; }
.card { min-height: 216px; border: 1px solid #e6e8ee; border-radius: 4px; box-shadow: 0 2px 12px rgba(0, 0, 0, .1); }
.card header { display: flex; align-items: center; justify-content: space-between; height: 54px; padding: 6px 15px 0; border-bottom: 1px solid #e6e8ee; }
.card h2 { display: flex; align-items: center; gap: 13px; margin: 0; font-size: 16px; font-weight: 400; line-height: 24px; }
.card button { width: 46px; height: 32px; border: 1px solid #dcdfe6; border-radius: 4px; }
.card p { margin: 0; padding: 19px 20px 17px; font-size: 28px; line-height: 32px; }

/* Taskbar */
.taskbar {
  display: grid;
  grid-template-columns: 1fr auto 1fr;
  align-items: center;
  height: 48px;
  padding-bottom: 2px;
  border-top: 1px solid #b5afaa;
  background: linear-gradient(90deg, #efdfcd 0%, #efdfc9 10%, #ecdacc 20%, #ead9cd 40%, #d8dbe0 64%, #d8dce0 70%, #efdccb 79%, #ecdcd2 84%, #e2dcdf 88%, #cfe3f6 95%, #d2e6f8 100%);
}
.weather { justify-self: start; padding-left: 16px; gap: 7px; text-align: left; line-height: 15px; }
.weather em { font-style: normal; color: #555; }
.dock { display: flex; align-items: center; gap: 4px; }
.dock button { position: relative; width: 40px; height: 40px; border-radius: 4px; }
.dock .start { width: 44px; }
.search { display: flex; align-items: center; gap: 10px; width: 218px; height: 30px; padding: 0 11px; border-radius: 15px; background: #faf5f0; box-shadow: 0 0 1px #999; }
.search input { flex: 1; min-width: 0; border: 0; padding: 0; background: none; outline: 0; font: 14px/20px "Noto Sans CJK SC", sans-serif; }
.search input::placeholder { color: #555; opacity: 1; }
.run::after { content: ""; position: absolute; left: 17px; bottom: 0; width: 6px; height: 3px; border-radius: 2px; background: #888; }
.front { background: #f5f2ef; box-shadow: 0 0 1px #aaa; }
.front::after { left: 12px; width: 16px; background: #1767b8; }
.alert { background: #fce6e4; }
.alert::after { background: #b8432f; }
.tray { justify-self: end; display: flex; align-items: center; padding-right: 12px; }
.tray button { width: 32px; height: 40px; }
.tray .ime { font-size: 15px; }
.tray .pair { width: 56px; gap: 8px; }
.tray .clock { width: 62px; text-align: right; justify-content: flex-end; font-family: "Open Sans", sans-serif; }

/* Overlays */
.caption {
  position: absolute;
  left: 0;
  right: 0;
  top: 891px;
  text-align: center;
  font: 500 55px/80px "Noto Sans CJK SC", sans-serif;
  color: #282828;
  pointer-events: none;
}
.cursor { position: absolute; left: 390px; top: 367px; }
```
